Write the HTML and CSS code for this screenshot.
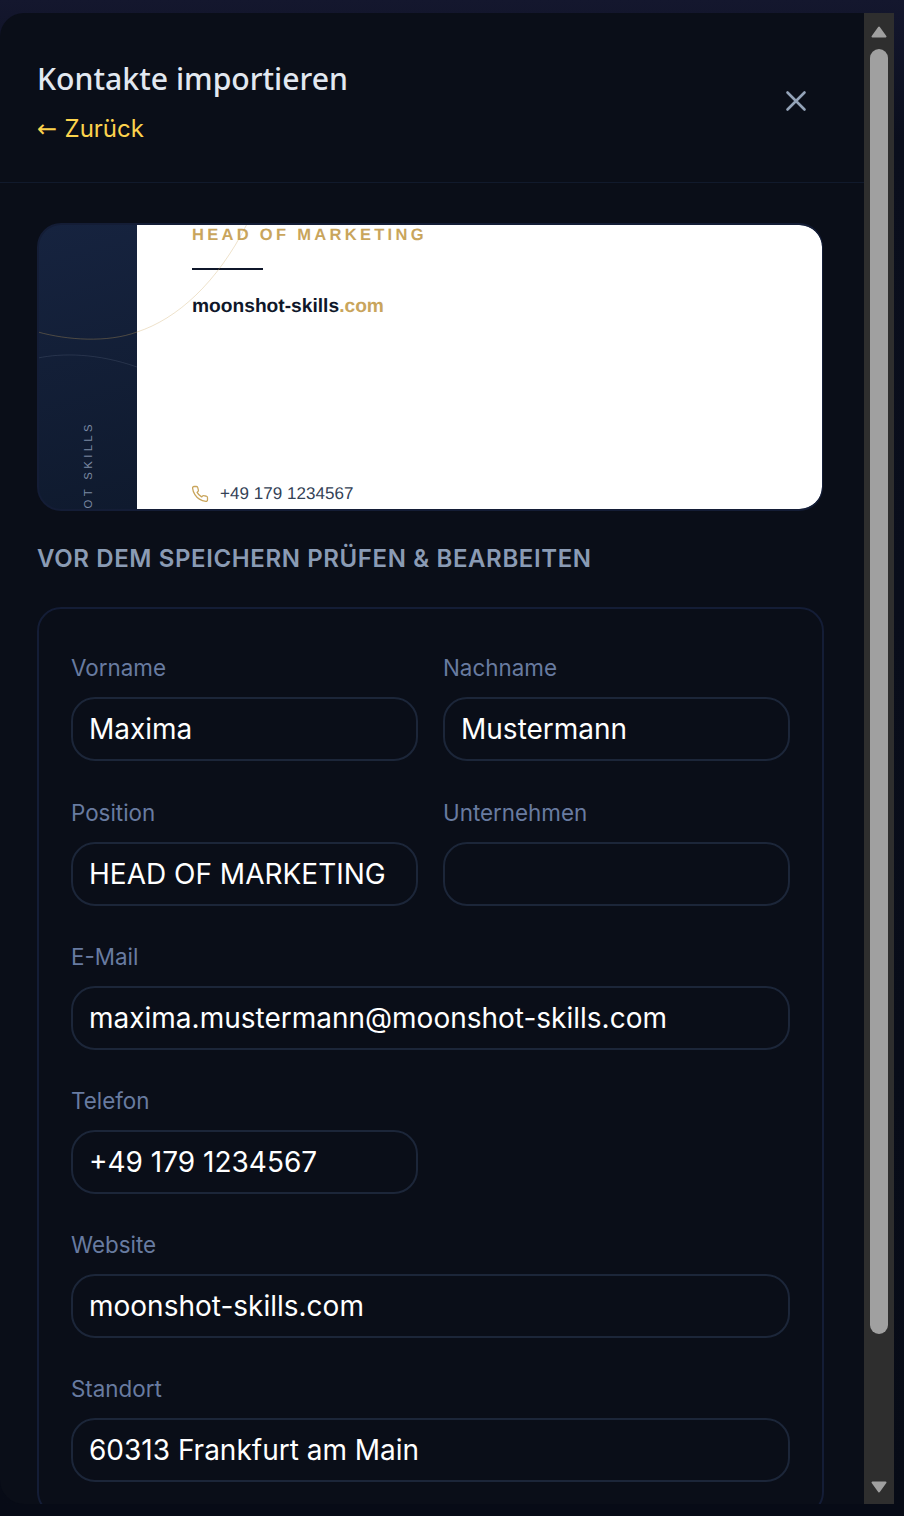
FILE: index.html
```html
<!DOCTYPE html>
<html lang="de">
<head>
<meta charset="utf-8">
<title>Kontakte importieren</title>
<link rel="stylesheet" href="styles.css">
</head>
<body>
<div class="modal">
  <main class="main">
    <header class="header">
      <div class="head-text">
        <h1 class="title">Kontakte importieren</h1>
        <a class="back"><span class="back-arrow">←</span> Zurück</a>
      </div>
      <svg class="close" width="26" height="26" viewBox="0 0 26 26" fill="none"><path d="M4.5 4.5 21.5 21.5M21.5 4.5 4.5 21.5" stroke="#94a3b8" stroke-width="2.6" stroke-linecap="round"/></svg>
    </header>
    <section class="content">
      <div class="card">
        <div class="side"><span class="brand">MOONSHOT SKILLS</span></div>
        <div class="face">
          <div class="role">HEAD OF MARKETING</div>
          <div class="rule"></div>
          <div class="domain">moonshot-skills<span class="tld">.com</span></div>
          <div class="phone">
            <svg class="phone-icon" width="18" height="18" viewBox="0 0 24 24" fill="none" stroke="#c9a55c" stroke-width="1.7" stroke-linecap="round" stroke-linejoin="round"><path d="M22 16.9v3a2 2 0 0 1-2.2 2 19.8 19.8 0 0 1-8.6-3.1 19.5 19.5 0 0 1-6-6A19.8 19.8 0 0 1 2.1 4.2 2 2 0 0 1 4.1 2h3a2 2 0 0 1 2 1.7c.1 1 .4 1.9.7 2.8a2 2 0 0 1-.5 2.1L8.1 9.9a16 16 0 0 0 6 6l1.3-1.3a2 2 0 0 1 2.1-.4c.9.3 1.8.6 2.8.7a2 2 0 0 1 1.7 2z"/></svg>
            <span>+49 179 1234567</span>
          </div>
        </div>
        <svg class="art" width="786" height="288" viewBox="0 0 786 288" fill="none">
          <path d="M1 109C30 117 70 120 100 109C140 96 180 60 210 1" stroke="#c9a55c" stroke-opacity=".32" stroke-width="1"/>
          <path d="M1 135C25 130 60 130 100 144" stroke="#94a3b8" stroke-opacity=".16" stroke-width="1"/>
        </svg>
      </div>
      <h2 class="section">VOR DEM SPEICHERN PRÜFEN &amp; BEARBEITEN</h2>
      <form class="form">
        <label class="field"><span class="label">Vorname</span><input class="input" value="Maxima"></label>
        <label class="field"><span class="label">Nachname</span><input class="input" value="Mustermann"></label>
        <label class="field"><span class="label">Position</span><input class="input" value="HEAD OF MARKETING"></label>
        <label class="field"><span class="label">Unternehmen</span><input class="input" value=""></label>
        <label class="field wide"><span class="label">E-Mail</span><input class="input" value="maxima.mustermann@moonshot-skills.com"></label>
        <label class="field"><span class="label">Telefon</span><input class="input" value="+49 179 1234567"></label>
        <label class="field wide"><span class="label">Website</span><input class="input" value="moonshot-skills.com"></label>
        <label class="field wide"><span class="label">Standort</span><input class="input" value="60313 Frankfurt am Main"></label>
      </form>
    </section>
  </main>
  <div class="scrollbar">
    <svg class="arrow arrow-up" width="18" height="14" viewBox="0 0 18 14"><path d="M9 2.5 15.5 11.5H2.5Z" fill="#a0a0a0" stroke="#a0a0a0" stroke-width="2" stroke-linejoin="round"/></svg>
    <div class="track"><div class="thumb"></div></div>
    <svg class="arrow arrow-down" width="18" height="14" viewBox="0 0 18 14"><path d="M2.5 2.5H15.5L9 11.5Z" fill="#a0a0a0" stroke="#a0a0a0" stroke-width="2" stroke-linejoin="round"/></svg>
  </div>
</div>
</body>
</html>
```
FILE: styles.css
```css
* { box-sizing: border-box; }
html, body { margin: 0; height: 1516px; overflow: hidden; }
body {
  background: linear-gradient(180deg, #14172e 0, #0a0e1c 140px, #070b16 100%);
  padding: 13px 10px 12px 0;
  font-family: Inter, "Liberation Sans", sans-serif;
}
.modal {
  display: flex;
  height: 1491px;
  background: #0a0e18;
  border-radius: 24px 0 0 24px;
  overflow: hidden;
}
.main { flex: 1; min-width: 0; overflow: hidden; }
.header {
  height: 170px;
  border-bottom: 1px solid #111a2c;
  padding: 46px 55px 0 37px;
  display: flex;
  justify-content: space-between;
  align-items: flex-start;
}
.title {
  margin: 0;
  font: 500 30.2px/40px "Noto Sans", sans-serif;
  color: #e2e8f0;
}
.back {
  display: block;
  margin-top: 14px;
  height: 32px;
  font: 400 24px/32px Inter, sans-serif;
  color: #fcd34d;
}
.back-arrow { font-family: "DejaVu Sans", sans-serif; font-size: 24px; line-height: 1; margin-right: .7px; }
.close { margin-top: 29px; }
.content { padding: 40px 39px 0 37px; }
.card {
  position: relative;
  display: flex;
  width: 786px;
  height: 288px;
  border: 2px solid #141d36;
  border-right-width: 1px;
  border-radius: 24px;
  overflow: hidden;
  background: #121d36;
}
.side {
  width: 98px;
  background: linear-gradient(165deg, #16233f 0%, #0f1a2e 100%);
  display: flex;
  justify-content: center;
  align-items: flex-start;
  overflow: hidden;
}
.brand {
  writing-mode: vertical-rl;
  transform: rotate(180deg);
  font: 400 11.3px/14px "Liberation Sans", sans-serif;
  letter-spacing: 3.4px;
  color: #7c8aa3;
  white-space: nowrap;
  margin-top: 196px;
  flex: none;
}
.face {
  flex: 1;
  padding-left: 55px;
  display: flex;
  flex-direction: column;
  font-family: "Liberation Sans", sans-serif;
  text-rendering: geometricPrecision;
  background: #fff;
  border-radius: 0 22px 22px 0;
}
.role {
  font-weight: 700;
  font-size: 16.5px;
  line-height: 20px;
  letter-spacing: 3.3px;
  color: #c9a55c;
  margin-top: 0;
}
.rule { width: 71px; height: 2px; background: #0f172a; margin-top: 23px; }
.domain {
  font-weight: 700;
  font-size: 19.2px;
  line-height: 24px;
  color: #0f172a;
  margin-top: 24.5px;
}
.tld { color: #c9a55c; }
.phone {
  display: flex;
  align-items: center;
  gap: 11.5px;
  margin-top: auto;
  margin-bottom: 3px;
  font-size: 17px;
  line-height: 24px;
  letter-spacing: .05px;
  color: #334155;
}
.phone-icon { margin-left: -1.5px; }
.art { position: absolute; left: -2px; top: -2px; pointer-events: none; }
.section {
  margin: 32px 0 0 0;
  font: 600 24px/32px Inter, sans-serif;
  color: #8a9bb4;
  letter-spacing: .62px;
}
.form {
  margin-top: 32px;
  width: 787px;
  border: 2px solid #141d36;
  border-radius: 24px;
  padding: 45.4px 32px 32px;
  display: grid;
  grid-template-columns: 347px 347px;
  column-gap: 25px;
  row-gap: 37.2px;
  align-content: start;
}
.field { display: flex; flex-direction: column; }
.wide { grid-column: 1 / span 2; }
.label {
  font: 400 22.4px/28px Inter, sans-serif;
  color: #687ba0;
  margin-bottom: 15px;
}
.input {
  display: block;
  width: 100%;
  height: 64px;
  border: 2px solid #1c2639;
  border-radius: 24px;
  background: transparent;
  padding: 0 16px;
  font: 400 28px/36px Inter, sans-serif;
  color: #fff;
  outline: none;
}
.scrollbar {
  width: 30px;
  background: #2e2e2e;
  display: flex;
  flex-direction: column;
  align-items: center;
}
.track { flex: 1; width: 18px; padding-top: 10px; }
.thumb { height: 1285px; background: #a0a0a0; border-radius: 9px; }
.arrow { flex: none; }
.arrow-up { margin-top: 11.5px; }
.arrow-down { margin-bottom: 10.5px; }
```
